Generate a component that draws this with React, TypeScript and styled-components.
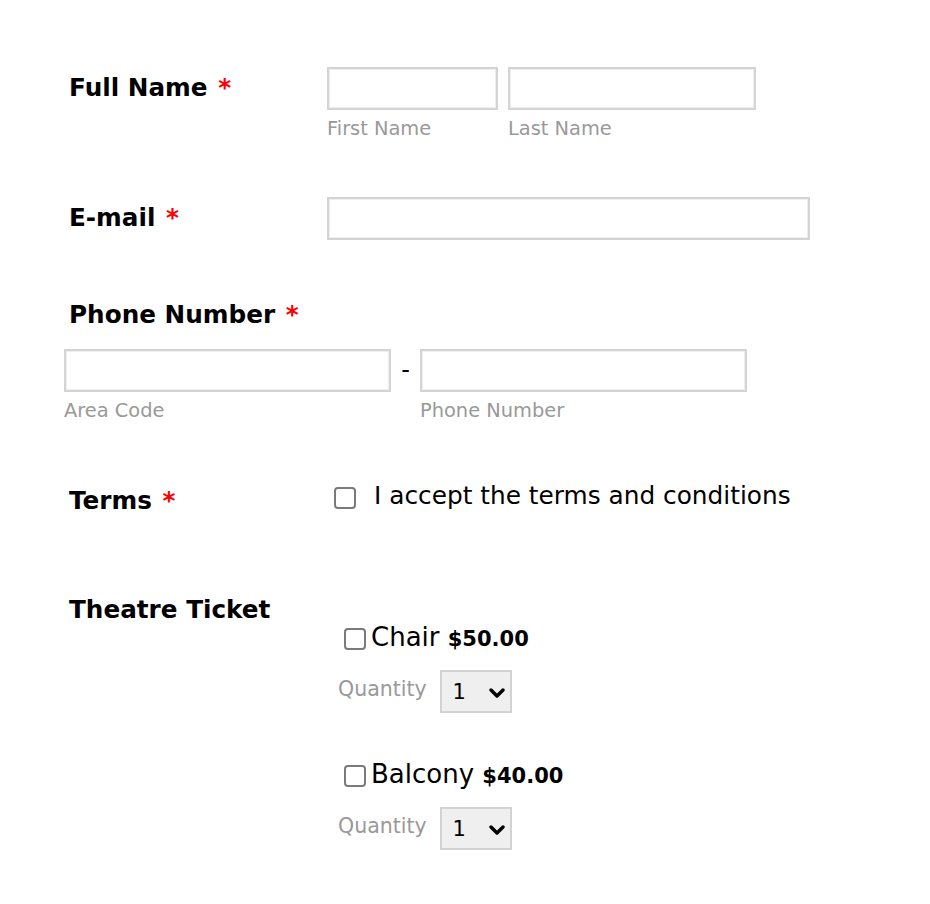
import React from "react";
import styled, { createGlobalStyle } from "styled-components";

const GlobalStyle = createGlobalStyle`
  html, body { margin: 0; padding: 0; background: #fff; }
  body {
    font-family: "DejaVu Sans", Verdana, sans-serif;
    color: #000;
  }
`;

const Form = styled.form`
  display: flex;
  flex-direction: column;
  padding: 67px 0 40px 64px;
`;

const Row = styled.div<{ $mt: number; $stacked?: boolean }>`
  display: grid;
  grid-template-columns: ${(p) => (p.$stacked ? "1fr" : "263px 1fr")};
  margin-top: ${(p) => p.$mt}px;
`;

const Label = styled.div<{ $pt?: number }>`
  padding: ${(p) => p.$pt ?? 0}px 0 0 5px;
  font-weight: 700;
  font-size: 24.7px;
  line-height: 29px;
`;

const Star = styled.span`
  color: #ff0000;
  margin-left: 2px;
`;

const Fields = styled.div<{ $gap: number; $mt?: number }>`
  display: flex;
  align-items: flex-start;
  gap: ${(p) => p.$gap}px;
  margin-top: ${(p) => p.$mt ?? 0}px;
`;

const FieldCol = styled.div`
  display: flex;
  flex-direction: column;
`;

const TextInput = styled.input<{ $w: number }>`
  box-sizing: border-box;
  width: ${(p) => p.$w}px;
  height: 43px;
  margin: 0;
  border: 2px solid #d4d4d4;
  box-shadow: inset 0 0 0 1px #eeeeee;
  background: #fff;
  outline: none;
  padding: 0 8px;
  font: inherit;
`;

const SubLabel = styled.div`
  margin-top: 7px;
  font-size: 19.4px;
  line-height: 23px;
  color: #999999;
`;

const Dash = styled.span`
  font-size: 24px;
  line-height: 43px;
  width: 9px;
  text-align: center;
`;

const CheckLine = styled.label<{ $gap: number; $size: number }>`
  display: flex;
  align-items: center;
  gap: ${(p) => p.$gap}px;
  font-size: ${(p) => p.$size}px;
  line-height: ${(p) => Math.round(p.$size * 1.2)}px;
`;

const Check = styled.input<{ $ml?: number; $dy?: number }>`
  appearance: none;
  box-sizing: border-box;
  width: 22px;
  height: 22px;
  margin: 0 0 0 ${(p) => p.$ml ?? 0}px;
  border: 2px solid #7a7a7a;
  border-radius: 4px;
  background: #fff;
  position: relative;
  top: ${(p) => p.$dy ?? 0}px;
  flex: none;
`;

const TermsCol = styled.div`
  padding-left: 7px;
`;

const Products = styled.div`
  display: flex;
  flex-direction: column;
  gap: 46px;
  padding: 27px 0 0 11px;
`;

const Product = styled.div`
  display: flex;
  flex-direction: column;
  gap: 15px;
`;

const Price = styled.b`
  font-size: 21px;
`;

const QtyRow = styled.div`
  display: flex;
  align-items: center;
  gap: 13px;
`;

const QtyLabel = styled.span`
  font-size: 20.5px;
  line-height: 25px;
  color: #999999;
  position: relative;
  top: -2px;
`;

const SelectWrap = styled.div`
  position: relative;
  width: 72px;
  height: 43px;
`;

const Select = styled.select`
  appearance: none;
  box-sizing: border-box;
  width: 100%;
  height: 100%;
  margin: 0;
  border: 2px solid #d2d2d2;
  background: #efefef;
  padding: 0 0 0 11px;
  font-family: "DejaVu Sans", Verdana, sans-serif;
  font-size: 21px;
  color: #000;
  outline: none;
  border-radius: 0;
`;

const Chevron = styled.svg`
  position: absolute;
  right: 7px;
  top: 18px;
  width: 16px;
  height: 10px;
  pointer-events: none;
`;

function QtySelect() {
  return (
    <SelectWrap>
      <Select defaultValue="1">
        <option value="1">1</option>
        <option value="2">2</option>
        <option value="3">3</option>
      </Select>
      <Chevron viewBox="0 0 16 10">
        <polyline
          points="2,2 8,8 14,2"
          fill="none"
          stroke="#000"
          strokeWidth="3.4"
          strokeLinecap="round"
          strokeLinejoin="round"
        />
      </Chevron>
    </SelectWrap>
  );
}

const products = [
  { name: "Chair", price: "$50.00" },
  { name: "Balcony", price: "$40.00" },
];

export default function App() {
  return (
    <>
      <GlobalStyle />
      <Form onSubmit={(e) => e.preventDefault()}>
        <Row $mt={0}>
          <Label $pt={6}>
            Full Name <Star>*</Star>
          </Label>
          <Fields $gap={10}>
            <FieldCol>
              <TextInput $w={171} />
              <SubLabel>First Name</SubLabel>
            </FieldCol>
            <FieldCol>
              <TextInput $w={248} />
              <SubLabel>Last Name</SubLabel>
            </FieldCol>
          </Fields>
        </Row>

        <Row $mt={57}>
          <Label $pt={6}>
            E-mail <Star>*</Star>
          </Label>
          <Fields $gap={0}>
            <TextInput $w={483} type="email" />
          </Fields>
        </Row>

        <Row $mt={60} $stacked>
          <Label>
            Phone Number <Star>*</Star>
          </Label>
          <Fields $gap={10} $mt={20}>
            <FieldCol>
              <TextInput $w={327} />
              <SubLabel>Area Code</SubLabel>
            </FieldCol>
            <Dash>-</Dash>
            <FieldCol>
              <TextInput $w={327} />
              <SubLabel>Phone Number</SubLabel>
            </FieldCol>
          </Fields>
        </Row>

        <Row $mt={59}>
          <Label $pt={5}>
            Terms <Star>*</Star>
          </Label>
          <TermsCol>
            <CheckLine $gap={18} $size={24.8}>
              <Check type="checkbox" $dy={2} />
              I accept the terms and conditions
            </CheckLine>
          </TermsCol>
        </Row>

        <Row $mt={80}>
          <Label>Theatre Ticket</Label>
          <Products>
            {products.map((p) => (
              <Product key={p.name}>
                <CheckLine $gap={5} $size={26}>
                  <Check type="checkbox" $ml={6} />
                  <span>
                    {p.name} <Price>{p.price}</Price>
                  </span>
                </CheckLine>
                <QtyRow>
                  <QtyLabel>Quantity</QtyLabel>
                  <QtySelect />
                </QtyRow>
              </Product>
            ))}
          </Products>
        </Row>
      </Form>
    </>
  );
}
